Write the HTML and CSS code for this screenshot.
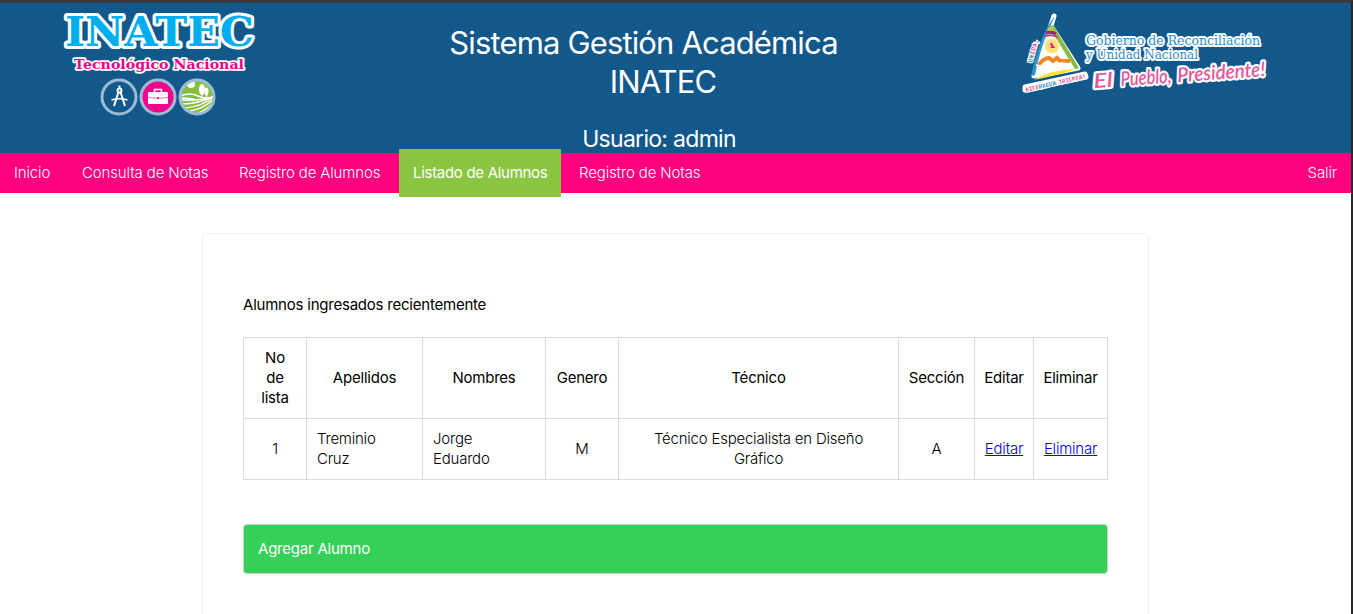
FILE: index.html
```html
<!DOCTYPE html>
<html lang="es">
<head>
<meta charset="utf-8">
<title>Sistema Gestión Académica INATEC</title>
<link rel="stylesheet" href="styles.css">
</head>
<body>
<div class="page">
  <header class="header">
    <svg class="logo-inatec" viewBox="58 5 204 115" width="204" height="115" role="img" aria-label="INATEC Tecnológico Nacional">
      <text class="brand" y="46" textLength="189" lengthAdjust="spacingAndGlyphs" x="65">INATEC</text>
      <text class="brand-sub" x="74" y="69" textLength="170" lengthAdjust="spacingAndGlyphs">Tecnológico Nacional</text>
      <g class="badge-ring">
        <circle cx="119" cy="97" r="17" fill="#13588a"/>
        <circle cx="158" cy="97" r="17" fill="#f0068d"/>
        <circle cx="197" cy="97" r="17" fill="#87bd3f"/>
      </g>
      <g fill="none" stroke="#fff" stroke-width="2">
        <circle cx="119.500" cy="90.500" r="2"/>
        <path d="M119.500 85.500v3M118.500 92l-4.500 14M120.500 92l4.500 14"/>
        <path d="M111.500 100Q119.500 97.500 127.500 100" stroke-width="1.500"/>
      </g>
      <path d="M154.500 92v-2.500h7V92" fill="none" stroke="#fff" stroke-width="1.500"/>
      <rect x="148" y="92" width="20" height="12" rx="1" fill="#fff"/>
      <path d="M148 97.500q10 1.500 20 0" fill="none" stroke="#f0068d" stroke-width=".6"/>
      <circle cx="158" cy="98" r="1" fill="#f0068d"/>
      <clipPath id="field"><circle cx="197" cy="97" r="15.500"/></clipPath>
      <g clip-path="url(#field)">
        <circle cx="191" cy="84" r="4" fill="#fff"/>
        <path d="M180 96q10-4 18 0t16 0" fill="none" stroke="#fff" stroke-width="1.500"/>
        <g fill="#fff"><ellipse cx="202" cy="89.500" rx="3" ry="5.500"/><ellipse cx="206.500" cy="91.500" rx="2" ry="4"/><path d="M201.500 94h1v3h-1zM206 94h1v3h-1z"/></g>
        <g fill="none" stroke="#fff" stroke-width="1.400">
          <path d="M180 100q18 1 33-3M182 104q16 0 31-7M185 108q15-1 28-10M190 111q12-2 23-11M198 113q9-3 15-10M180 98l14 1"/>
        </g>
      </g>
    </svg>

    <div class="titles">
      <h1 class="title"><span class="title-top">Sistema Gestión Académica</span><span class="title-bottom">INATEC</span></h1>
      <p class="user">Usuario: admin</p>
    </div>

    <svg class="logo-gov" viewBox="1018 8 256 90" width="256" height="90" role="img" aria-label="Gobierno de Reconciliación y Unidad Nacional">
      <g stroke="#fff" stroke-width="5" stroke-linejoin="round" fill="#fff">
        <path d="M1054 16L1034 76Q1054 73 1078 68L1051 26z"/>
        <path d="M1025 90L1086 77l-1-3-60 13z"/>
        <path d="M1029 62l7-20"/>
      </g>
      <path d="M1055 16Q1041 32 1031 76l4-1q5-26 14-46z" fill="#2698d6"/>
      <path d="M1049 27l4-2 26 43-4 1z" fill="#83bd3d"/>
      <path d="M1047 31h8l-2-4h-4z" fill="#b5cb39"/>
      <path d="M1046 33q5-2 10 1" stroke="#7f3179" stroke-width="3" fill="none"/>
      <path d="M1045 36.500q6-3 13 1" stroke="#d04264" stroke-width="2" fill="none"/>
      <circle cx="1052" cy="46" r="7" fill="#f8df78" stroke="#fae9a1" stroke-width="2" stroke-dasharray="1.500 1"/>
      <path d="M1051 42l4 6h-5l2-2-2-1z" fill="#df1684"/>
      <path d="M1038 66q5-8 11-8l4 3 4-3 3 3h10" fill="none" stroke="#ef8728" stroke-width="4"/>
      <path d="M1036 65q8 2 12-2l7 2 6-2 10 1" fill="none" stroke="#fff" stroke-width="1.500"/>
      <path d="M1034 80q18-11 43-11-14 5-43 11z" fill="#f8e33a"/>
      <text class="motto" x="1026" y="92" textLength="62" transform="rotate(-13 1026 92)"><tspan class="rose">NICA</tspan>RAGUA <tspan class="rose">TRIUMFA!</tspan></text>
      <text class="motto" x="1032" y="63" textLength="24" transform="rotate(-75 1032 63)">UN<tspan class="rose">IDA,</tspan></text>
      <text class="gov" x="1086" y="45" textLength="174" lengthAdjust="spacingAndGlyphs">Gobierno de Reconciliación</text>
      <text class="gov" x="1086" y="59" textLength="112" lengthAdjust="spacingAndGlyphs">y Unidad Nacional</text>
      <g class="slogan" transform="rotate(-4 1094 88)">
        <text x="1094" y="88" textLength="19" lengthAdjust="spacingAndGlyphs">El</text>
        <text x="1121" y="88" textLength="51" lengthAdjust="spacingAndGlyphs">Pueblo,</text>
        <text x="1178" y="88" textLength="88" lengthAdjust="spacingAndGlyphs">Presidente!</text>
      </g>
    </svg>
  </header>

  <nav class="nav">
    <a class="link inicio">Inicio</a>
    <a class="link consulta">Consulta de Notas</a>
    <a class="link registro">Registro de Alumnos</a>
    <a class="link active">Listado de Alumnos</a>
    <a class="link notas">Registro de Notas</a>
    <a class="link salir">Salir</a>
  </nav>

  <main class="card">
    <h2 class="heading">Alumnos ingresados recientemente</h2>
    <table class="students">
      <colgroup><col class="c-no"><col class="c-ape"><col class="c-nom"><col class="c-gen"><col class="c-tec"><col class="c-sec"><col class="c-edit"><col class="c-del"></colgroup>
      <thead>
        <tr><th>No<br>de<br>lista</th><th>Apellidos</th><th>Nombres</th><th>Genero</th><th>Técnico</th><th>Sección</th><th>Editar</th><th>Eliminar</th></tr>
      </thead>
      <tbody>
        <tr><td>1</td><td class="left">Treminio<br>Cruz</td><td class="left">Jorge<br>Eduardo</td><td>M</td><td>Técnico Especialista en Diseño<br>Gráfico</td><td>A</td><td><a href="#">Editar</a></td><td><a href="#">Eliminar</a></td></tr>
      </tbody>
    </table>
    <a class="add">Agregar Alumno</a>
  </main>
</div>
</body>
</html>
```
FILE: styles.css
```css
* { box-sizing: border-box; }
body {
  margin: 0;
  background: #fff;
  color: #000;
  font-family: Inter, "Liberation Sans", sans-serif;
  font-size: 15px;
  font-weight: 300;
  line-height: 20px;
  letter-spacing: -0.22px;
}
.page {
  height: 614px;
  overflow: hidden;
  border-top: 3px solid #3b3b3f;
  border-right: 2px solid #29292b;
}
.header {
  display: flex;
  justify-content: space-between;
  height: 150px;
  padding: 0 77px 0 58px;
  background: #13588a;
  color: #fff;
}
svg { letter-spacing: 0; }
.logo-inatec { margin-top: 2px; }
.logo-gov { margin-top: 5px; }
.brand {
  font: bold 41px "DejaVu Serif", serif;
  fill: #00aeef;
  stroke: #fff;
  stroke-width: 6px;
  stroke-linejoin: round;
  paint-order: stroke;
}
.brand-sub {
  font: bold 13px "DejaVu Serif", serif;
  fill: #ec008c;
  stroke: #fff;
  stroke-width: 3.500px;
  stroke-linejoin: round;
  paint-order: stroke;
}
.badge-ring { stroke: #9cbcd5; stroke-width: 3px; }
.gov {
  font: 13.500px "DejaVu Serif", serif;
  fill: #2a8fd2;
  stroke: #fff;
  stroke-width: 4px;
  stroke-linejoin: round;
  paint-order: stroke;
}
.slogan {
  font: italic 600 20px Lato, sans-serif;
  fill: #e5589d;
  stroke: #fff;
  stroke-width: 4.500px;
  stroke-linejoin: round;
  paint-order: stroke;
}
.motto {
  font: bold 6.500px "Liberation Mono", monospace;
  fill: #2f8fd0;
  stroke: #fff;
  stroke-width: 2px;
  paint-order: stroke;
}
.rose { fill: #e2569b; }
.titles { width: 430px; padding-left: 7px; text-align: center; }
.title {
  display: flex;
  flex-direction: column;
  margin: 20px 0 0;
  font-size: 31px;
  font-weight: 400;
  line-height: 39px;
  letter-spacing: -0.85px;
}
.title-top { margin: 0 -20px; white-space: nowrap; }
.title-bottom { padding-left: 39px; }
.user {
  margin: 23px 0 0;
  padding-left: 31px;
  font-size: 23px;
  font-weight: 400;
  line-height: 30px;
  letter-spacing: -0.7px;
}
.nav {
  display: flex;
  align-items: center;
  height: 40px;
  padding: 0 14px;
  background: #ff0080;
  color: #fff;
  white-space: nowrap;
  letter-spacing: -0.140px;
}
.inicio { width: 68px; }
.consulta { width: 157px; }
.registro { width: 160px; }
.active {
  width: 162px;
  margin: -4px 18px -4px 0;
  padding: 14px;
  background: #8ac641;
  font-weight: 400;
  letter-spacing: -0.3px;
}
.salir { margin-left: auto; }
.card {
  width: 947px;
  height: 480px;
  margin: 40px 0 0 202px;
  padding: 61px 40px 0;
  border: 1px solid #f0f0f0;
  border-radius: 4px;
}
.heading {
  margin: 0 0 22px;
  font-size: 15px;
  font-weight: 400;
  line-height: 20px;
}
.students {
  width: 865px;
  table-layout: fixed;
  border-collapse: collapse;
  text-align: center;
}
.students th, .students td {
  padding: 10px 0;
  border: 1px solid #dbdbdb;
  font-weight: 300;
}
.students th { font-weight: 400; }
.students .left { padding-left: 10px; text-align: left; }
.students a { color: #0000ee; }
.c-no { width: 63px; }
.c-ape { width: 116px; }
.c-nom { width: 123px; }
.c-gen { width: 73px; }
.c-tec { width: 280px; }
.c-sec { width: 76px; }
.c-edit { width: 59px; }
.c-del { width: 74px; }
.add {
  display: block;
  height: 50px;
  margin-top: 44px;
  padding: 14px;
  border: 1px solid #c9cfca;
  border-radius: 4px;
  background: #35d058;
  color: #fff;
  font-weight: 400;
}
```
